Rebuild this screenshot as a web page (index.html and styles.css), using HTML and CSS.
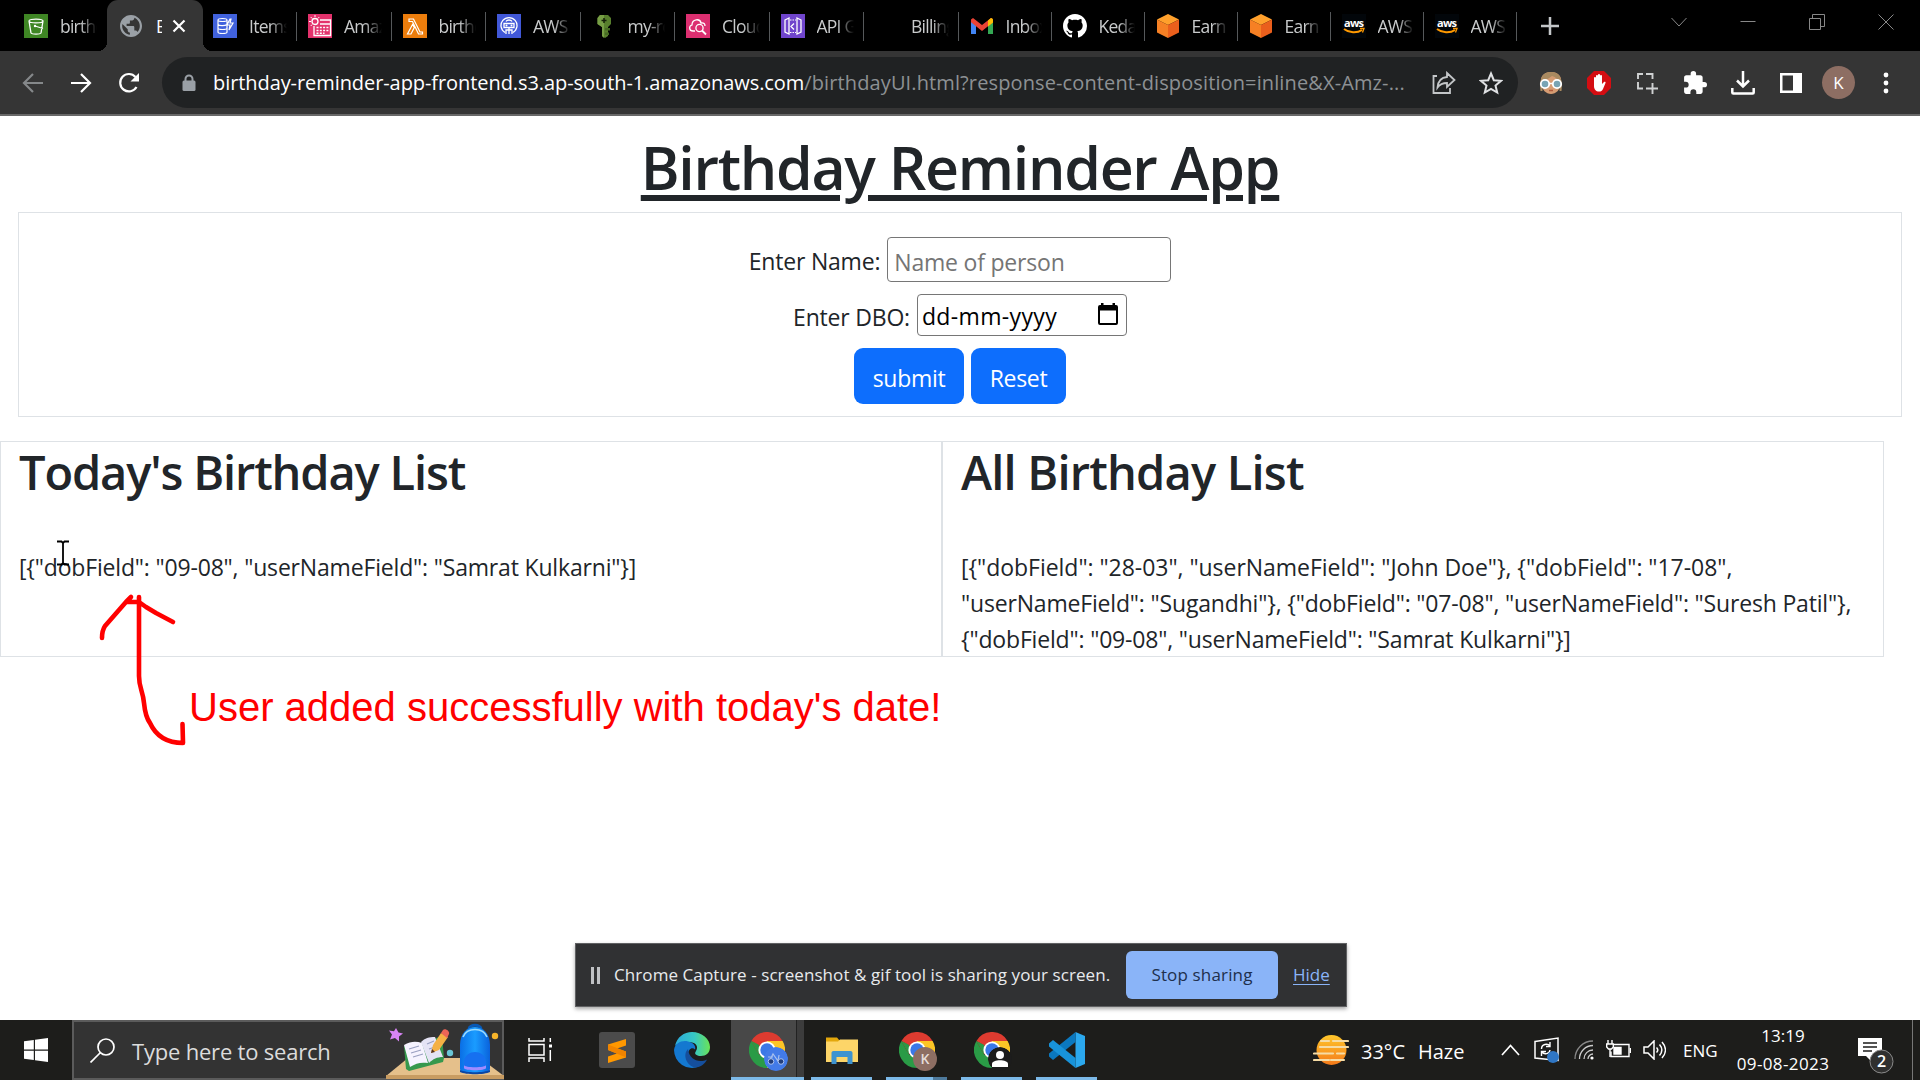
FILE: index.html
```html
<!DOCTYPE html>
<html lang="en">
<head>
<meta charset="utf-8">
<title>Birthday Reminder App</title>
<link rel="stylesheet" href="styles.css">
</head>
<body>
<svg class="defs" width="0" height="0">
  <defs>
    <symbol id="chrome" viewBox="0 0 36 36">
      <path d="M18 18 2.4 9A18 18 0 0 1 33.600 9z" fill="#dd3b30"/>
      <path d="M18 18V9h15.600A18 18 0 0 1 18 36z" fill="#fcc526"/>
      <path d="M18 36A18 18 0 0 1 2.400 9L10.200 22.500 18 27l7.800-4.500z" fill="#2a9b46"/>
      <path d="M18 9 10.200 13.500 2.400 9l7.800 13.500z" fill="#dd3b30"/>
      <path d="M2.400 9l7.800 13.500V13z" fill="#2a9b46"/>
      <circle cx="18" cy="18" r="8.600" fill="#fff"/><circle cx="18" cy="18" r="6.700" fill="#3a78e7"/>
    </symbol>
    <symbol id="cube" viewBox="0 0 24 24">
      <path d="M12 0 23 5.500 12 11 1 5.500z" fill="#ffa02c"/><path d="M1 5.500 12 11v13L1 18.500z" fill="#f68024"/><path d="M23 5.500 12 11v13l11-5.500z" fill="#ea5f1c"/>
    </symbol>
    <symbol id="aws" viewBox="0 0 24 24">
      <rect width="24" height="24" fill="#02060a"/>
      <text x="2" y="13" font-size="11" font-weight="bold" textLength="20" fill="#fff" font-family="Open Sans, sans-serif">aws</text>
      <path d="M2 15c5 4 13 4.500 18 1" fill="none" stroke="#f90" stroke-width="2"/><path d="M18 14.500h4l-1.500 4" fill="none" stroke="#f90" stroke-width="1.300"/>
    </symbol>
  </defs>
</svg>

<header class="tabs">
  <div class="tab first"><svg class="fav" viewBox="0 0 24 24"><rect width="24" height="24" fill="#3f8624"/><path d="M5 7l2 12c1 1.500 9 1.500 10 0l2-12M5 7c0-2.500 14-2.500 14 0s-14 2.500-14 0M11 12l8 2.500" fill="none" stroke="#fff" stroke-width="1.300"/><circle cx="11" cy="12" r="1.200" fill="#fff"/></svg><span class="name">birthday</span></div>
  <div class="tab active"><svg class="globe" viewBox="2 2 20 20"><path fill="#9aa0a6" d="M12 2C6.480 2 2 6.480 2 12s4.480 10 10 10 10-4.480 10-10S17.520 2 12 2zm-1 17.930c-3.950-.49-7-3.850-7-7.930 0-.62.080-1.210.210-1.790L9 15v1c0 1.100.9 2 2 2v1.930zm6.900-2.540c-.26-.81-1-1.390-1.900-1.390h-1v-3c0-.55-.45-1-1-1H8v-2h2c.55 0 1-.45 1-1V7h2c1.100 0 2-.9 2-2v-.41c2.930 1.190 5 4.060 5 7.410 0 2.080-.8 3.970-2.100 5.390z"/></svg><span class="name">B</span><svg class="close" viewBox="0 0 14 14"><path d="M1.500 1.500l11 11m0-11l-11 11" stroke="#fff" stroke-width="2.200"/></svg></div>
  <div class="tab sep"><svg class="fav" viewBox="0 0 24 24"><rect width="24" height="24" fill="#4162dd"/><path d="M5 6v12c0 2 9 2 9 0V6M5 6c0-2 9-2 9 0s-9 2-9 0M5 10c0 2 7 2 9 .5M5 14c0 2 9 2 9 0M17 5l-3 6h3l-1 5 4-7h-3l1-4z" fill="none" stroke="#fff" stroke-width="1.200"/></svg><span class="name">Items</span></div>
  <div class="tab sep"><svg class="fav" viewBox="0 0 24 24"><rect width="24" height="24" fill="#e3326c"/><path d="M12 6h10.500v15.500H6V12M12 10h10.500" fill="none" stroke="#fff" stroke-width="1.300"/><path d="M8.500 13.500h12M8.500 16.500h12M8.500 19.300h8" stroke="#fff" stroke-width="1.500" stroke-dasharray="2 1.300"/><circle cx="7" cy="7.500" r="3" fill="none" stroke="#fff" stroke-width="1.300"/><path d="M7 1v2M1 7.500h2M2.700 3l1.500 1.500M11.300 3l-1.500 1.500M2.700 12l1.500-1.500" stroke="#fff"/></svg><span class="name">Amazon</span></div>
  <div class="tab sep"><svg class="fav" viewBox="0 0 24 24"><rect width="24" height="24" fill="#ec7d0c"/><path d="M6 5h4.500l6.500 13h2.500v2H15.500L9.500 7.500H6zM9.500 10.500l-5 9.500h3.500l3.300-6.500z" fill="none" stroke="#fff" stroke-width="1.200"/></svg><span class="name">birthday</span></div>
  <div class="tab sep"><svg class="fav" viewBox="0 0 24 24"><rect width="24" height="24" fill="#4158d8"/><path d="M8 18.500a8 8 0 1 1 8 0M9 20v-4h6v4M12 16v4M7 9.500h10v4H7zM9 7.500c1-2 5-2 6 0M12 14v2" fill="none" stroke="#fff" stroke-width="1.300"/><circle cx="9.500" cy="11.500" r="1" fill="#fff"/><circle cx="14.500" cy="11.500" r="1" fill="#fff"/></svg><span class="name">AWS</span></div>
  <div class="tab sep"><svg class="fav" viewBox="0 0 24 24"><path d="M8 1h8l3 3v6l-3 3v9l-3 2-3-2V13L5.500 10V4z" fill="#587f2d"/><path d="M5.500 4 8 1h4v23l-2-2V13L5.500 10z" fill="#779e45"/><path d="M12 4v5M9.500 6.500h5" stroke="#152009" stroke-width="1.500"/><path d="M13 14h5v2.500h-5M13 18.500h4V21h-4" fill="#466b23"/></svg><span class="name">my-role</span></div>
  <div class="tab sep"><svg class="fav" viewBox="0 0 24 24"><rect width="24" height="24" fill="#dc2f70"/><path d="M9 17H7c-4 0-4.500-5-1-6 0-6 8-7 9-2 3-.5 4 1 4 3" fill="none" stroke="#fff" stroke-width="1.300"/><circle cx="13.500" cy="14" r="3.600" fill="none" stroke="#fff" stroke-width="1.300"/><path d="M16 16.500l4 4" stroke="#fff" stroke-width="1.800"/></svg><span class="name">CloudW</span></div>
  <div class="tab sep"><svg class="fav" viewBox="0 0 24 24"><rect width="24" height="24" fill="#7045cc"/><path d="M4 6l4-2v16l-4-2zM20 6l-4-2v16l4-2zM13 9.500l-3 3 3 3" fill="none" stroke="#fff" stroke-width="1.300"/><path d="M9 6h6M9 18.500h6" stroke="#fff" stroke-dasharray="1.500 1"/></svg><span class="name">API Ga</span></div>
  <div class="tab sep"><span class="fav"></span><span class="name">Billing</span></div>
  <div class="tab sep n"><svg class="fav" viewBox="0 0 24 24"><path d="M1 6v14h5V11z" fill="#4285f4"/><path d="M23 6v14h-5V11z" fill="#34a853"/><path d="M1 5.500 3 4l9 7 9-7 2 1.500v2.700L12 17 1 8.200z" fill="#ea4335"/><path d="M18 6.500 21 4c1 0 2 .7 2 2v2.500l-5 4z" fill="#fbbc04"/></svg><span class="name">Inbox</span></div>
  <div class="tab sep n"><svg class="fav" viewBox="0 0 16 16"><path fill="#fff" d="M8 0C3.580 0 0 3.580 0 8c0 3.540 2.290 6.530 5.470 7.590.4.070.55-.17.55-.38 0-.19-.01-.82-.01-1.490-2.010.37-2.530-.49-2.690-.94-.09-.23-.48-.94-.82-1.130-.28-.15-.68-.52-.01-.53.630-.01 1.080.58 1.230.82.720 1.210 1.870.87 2.330.66.070-.52.280-.87.510-1.070-1.780-.2-3.640-.89-3.640-3.950 0-.87.310-1.590.820-2.150-.08-.2-.36-1.020.080-2.120 0 0 .67-.21 2.200.82.640-.18 1.320-.27 2-.27s1.360.09 2 .27c1.530-1.040 2.200-.82 2.200-.82.440 1.100.160 1.920.080 2.120.510.560.820 1.270.820 2.150 0 3.070-1.870 3.750-3.650 3.950.290.250.540.730.540 1.480 0 1.070-.01 1.930-.01 2.200 0 .21.150.46.550.38A8 8 0 0 0 16 8c0-4.420-3.580-8-8-8z"/></svg><span class="name">Kedar</span></div>
  <div class="tab sep n"><svg class="fav"><use href="#cube"/></svg><span class="name">Earn F</span></div>
  <div class="tab sep n"><svg class="fav"><use href="#cube"/></svg><span class="name">Earn F</span></div>
  <div class="tab sep n"><svg class="fav"><use href="#aws"/></svg><span class="name">AWS</span></div>
  <div class="tab sep n"><svg class="fav"><use href="#aws"/></svg><span class="name">AWS</span></div>
  <svg class="plus" viewBox="0 0 20 20"><path d="M10 1v18M1 10h18" stroke="#c4c7c9" stroke-width="2.500"/></svg>
  <div class="winctl">
    <svg viewBox="0 0 16 16"><path d="M.5 4l7.500 8 7.500-8"/></svg>
    <svg viewBox="0 0 16 16"><path d="M.5 7.500h15"/></svg>
    <svg viewBox="0 0 16 16"><path d="M.5 4.500h11v11H.5zM3.500 4V.5h12v12H12"/></svg>
    <svg viewBox="0 0 16 16"><path d="M.5.5l15 15m0-15l-15 15"/></svg>
  </div>
</header>

<nav class="toolbar">
  <svg class="nav" viewBox="0 0 22 22" stroke="#85888a"><path d="M21 11H2.500M11 2l-9 9 9 9"/></svg>
  <svg class="nav" viewBox="0 0 22 22" stroke="#fff"><path d="M1 11h18.500M11 2l9 9-9 9"/></svg>
  <svg class="nav" viewBox="0 0 22 22" stroke="#fff"><path d="M18.500 15A8.700 8.700 0 1 1 17.500 5"/><path d="M21 1v8.500h-8.500z" fill="#fff" stroke="none"/></svg>
  <div class="omnibox">
    <svg class="lock" viewBox="0 0 14 18"><path d="M3.500 8V5a3.500 3.500 0 0 1 7 0v3" fill="none" stroke="#9aa0a6" stroke-width="2"/><rect y="6.500" x=".5" width="13" height="10.500" rx="1.500" fill="#9aa0a6"/></svg>
    <div class="url"><span class="host">birthday-reminder-app-frontend.s3.ap-south-1.amazonaws.com</span><span class="path">/birthdayUI.html?response-content-disposition=inline&amp;X-Amz-...</span></div>
    <svg class="act" viewBox="0 0 24 24"><path d="M5 5H1.500v17H18v-5M15 2l7.500 7L15 16v-4c-4 0-7 1-9.500 4.500C6 10.500 9 6.500 15 6z" fill="none" stroke="#c3c6c8" stroke-width="1.800"/></svg>
    <svg class="act" viewBox="0 0 24 24"><path d="M12 2.500l2.800 6.700 7.200.6-5.500 4.700 1.700 7L12 17.800 5.800 21.500l1.700-7L2 9.800l7.200-.6z" fill="none" stroke="#dfe1e3" stroke-width="2"/></svg>
  </div>
  <div class="ext">
    <svg viewBox="0 0 24 24"><path d="M2 12C1 5 5 1 12 1s11 4 10 11c-1 7-5 11-10 11S3 19 2 12z" fill="#d69c72"/><path d="M1.500 20C0 8 3 1 12 1s12 7 10.500 19L20.500 20V12C19 9 17 6 13 5 9 8 6 9 3.500 11v9z" fill="#a98a60"/><circle cx="6" cy="13" r="4.200" fill="#78a4b4" stroke="#fff" stroke-width="1.800"/><circle cx="18" cy="13" r="4.200" fill="#78a4b4" stroke="#fff" stroke-width="1.800"/><path d="M10 12.500h4" stroke="#fff" stroke-width="1.500"/><path d="M10 19.500h4" stroke="#b05a3c" stroke-width="1.500"/></svg>
    <svg viewBox="0 0 24 24"><path d="M7 0h10l7 7v10l-7 7H7l-7-7V7z" fill="#d40d12"/><path d="M7 15V7c0-1.500 2-1.500 2 0v4V5c0-1.500 2-1.500 2 0v6V4c0-1.500 2-1.500 2 0v7V5c0-1.500 2-1.500 2 0v8l2-2c1-.8 2 0 1.500 1L16 18c-1 2-2 2.500-4 2.500-3 0-5-2-5-5.500z" fill="#fff"/></svg>
    <svg viewBox="0 0 24 24"><path d="M3 8V3h5M11 3h6.500v5M3 11v6.500h5M11 17.500h2M17.500 12v11M12.500 17.500h10.500" fill="none" stroke="#d0d2d3" stroke-width="1.900"/></svg>
    <svg viewBox="1 1 22 22"><path fill="#fff" d="M20.500 11H19V7c0-1.100-.9-2-2-2h-4V3.500a2.500 2.500 0 0 0-5 0V5H4c-1.100 0-2 .9-2 2v3.800h1.500a2.700 2.700 0 0 1 0 5.400H2V20c0 1.100.9 2 2 2h3.800v-1.500a2.700 2.700 0 0 1 5.400 0V22H17c1.100 0 2-.9 2-2v-4h1.500a2.500 2.500 0 0 0 0-5z"/></svg>
    <svg viewBox="0 0 24 24"><path d="M12 0v15M6 9.500l6 6 6-6M1.300 17v4.500q0 1 1 1h19.400q1 0 1-1V17" fill="none" stroke="#fff" stroke-width="2.500"/></svg>
    <svg viewBox="0 0 24 24"><path fill="#fff" fill-rule="evenodd" d="M1 2h22v20H1zM3.500 4.500v15H14v-15z"/></svg>
    <span class="avatar">K</span>
    <svg viewBox="0 0 24 24" fill="#fff"><circle cx="12" cy="4" r="2.400"/><circle cx="12" cy="12" r="2.400"/><circle cx="12" cy="20" r="2.400"/></svg>
  </div>
</nav>

<main class="page">
  <h1>Birthday Reminder App</h1>
  <form class="panel">
    <div class="row name-row"><label>Enter Name:</label><div class="field text">Name of person</div></div>
    <div class="row dob-row"><label>Enter DBO:</label><div class="field date"><span>dd-mm-yyyy</span><svg viewBox="0 0 20 22" width="20" height="22"><path fill-rule="evenodd" d="M3 0h2.500v2h9V0H17v2h1a2 2 0 0 1 2 2v16a2 2 0 0 1-2 2H2a2 2 0 0 1-2-2V4a2 2 0 0 1 2-2h1zM2 7.500V20h16V7.500z"/></svg></div></div>
    <div class="row btn-row"><button type="button" class="btn submit">submit</button><button type="button" class="btn reset">Reset</button></div>
  </form>
  <section class="lists">
    <div class="card today"><h2>Today's Birthday List</h2><p>[{"dobField": "09-08", "userNameField": "Samrat Kulkarni"}]</p></div>
    <div class="card all"><h2>All Birthday List</h2><p><span class="loose">[{"dobField": "28-03", "userNameField": "John Doe"}, {"dobField": "17-08",</span><br>"userNameField": "Sugandhi"}, {"dobField": "07-08", "userNameField": "Suresh Patil"},<br>{"dobField": "09-08", "userNameField": "Samrat Kulkarni"}]</p></div>
  </section>
</main>

<svg class="cursor" viewBox="0 0 14 26"><path d="M1 1.500h4.500L7 3l1.500-1.500H13M7 2.500v21M1 24.500h4.500L7 23l1.500 1.500H13" fill="none" stroke="#000" stroke-width="1.800"/></svg>
<svg class="arrow" viewBox="0 0 100 160"><path d="M2 47C2 42 3 38 5 35L26 11l5-5M27 11h12l7 5 10 6 17 9M39 6v79c0 12 4 15 5 27 1 10 3 16 6 20 6 13 16 20 33 20l-.5-19" fill="none" stroke="#f00" stroke-width="4.600" stroke-linecap="round" stroke-linejoin="round"/></svg>
<div class="note">User added successfully with today's date!</div>

<aside class="sharebar">
  <span class="pause"></span>
  <span class="msg">Chrome Capture - screenshot &amp; gif tool is sharing your screen.</span>
  <span class="stop">Stop sharing</span>
  <span class="hide">Hide</span>
</aside>

<footer class="taskbar">
  <div class="start"><svg viewBox="0 0 24 24" width="24" height="24"><path fill="#fff" d="M0 3.300 9.800 2v9.500H0zM11 1.800 24 0v11.500H11zM0 12.700h9.800V22L0 20.700zM11 12.700h13V24l-13-1.800z"/></svg></div>
  <div class="search">
    <svg class="mag" viewBox="0 0 25 25"><circle cx="16" cy="9" r="8" fill="none" stroke="#fff" stroke-width="1.700"/><path d="M10.500 14.500.5 24.500" stroke="#fff" stroke-width="1.700"/></svg>
    <span class="ph">Type here to search</span>
    <svg class="art" viewBox="0 0 118 58">
      <defs><linearGradient id="bag"><stop offset="0" stop-color="#0a6fe6"/><stop offset=".5" stop-color="#1a9cff"/><stop offset="1" stop-color="#0a62dc"/></linearGradient></defs>
      <path d="M22 37h72l24 18v3H0v-3z" fill="#e5c08b"/><path d="M0 54h118v4H0z" fill="#c89c62"/>
      <path d="M10 7l2.500 4.500 4.500 1-4 3v5l-4-3.500-5 1.500 2-5L3 9.500l5 .8z" fill="#d884f5"/>
      <path d="M18 25l18-3 20-7 2 22-1 4-34 9-3-2z" fill="#36984d"/>
      <path d="M18 24c7-4 12-4 18-2l6 20c-7-1-12 0-18 4z" fill="#f6f3ff"/><path d="M35 21c4-4 8-5 14-5l8 20c-6 0-10 2-14 6z" fill="#e5e3f5"/>
      <path d="M23 28l10-3M25 32l10-3M27 36l10-3M41 23l7-3M43 28l6-2" stroke="#9aa0c2" stroke-width="1.300"/>
      <path d="M45 32l2-8L55 12l7 4-9 13z" fill="#f5b044"/><path d="M55 12l2-3c2-2 7 1 6 4l-2 4z" fill="#ec6557"/><path d="M45 32l1-4 3 3z" fill="#553223"/>
      <circle cx="64" cy="32" r="3.200" fill="#69c6d7"/><circle cx="109" cy="15" r="3.200" fill="#f8b52b"/>
      <path d="M83 8c0-5 12-5 12 0" fill="none" stroke="#0859b5" stroke-width="3"/>
      <path d="M74 48V24c0-24 30-24 30 0v24c0 6-30 6-30 0z" fill="url(#bag)"/>
      <path d="M77 16c4-10 20-10 24 0" fill="none" stroke="#9bdcff" stroke-width="1.600"/>
      <path d="M78 46V40c2-12 20-12 22 0v6c0 4-22 4-22 0z" fill="#1670f0"/><path d="M78 44c0 3 22 3 22 0v3c0 3-22 3-22 0z" fill="#a08bff"/>
      <path d="M74 49c6 3 24 3 30 0v2c-6 3-24 3-30 0z" fill="#0a46a5"/>
    </svg>
  </div>
  <div class="tview"><svg viewBox="0 0 24 24" width="24" height="24" fill="none" stroke="#fff" stroke-width="1.500"><path d="M1 0v3h15V0M1 24v-4h15v4M1 6.500h15v10.500H1zM22.300 0v4M22.300 12v11"/><path d="M21 8h3" stroke-width="3"/></svg></div>
  <div class="app sub"><svg viewBox="0 0 36 36"><rect width="36" height="36" rx="3" fill="#4b4b4b"/><path d="M9 12.500 27 7v6.500l-9 3 9 3v6L9 31v-6.500l9-3-9-3.500z" fill="#ff9800"/><path d="M9 12.500l18 7v6L9 18z" fill="#f08400"/></svg></div>
  <div class="app edge"><svg viewBox="0 0 36 36">
    <defs><linearGradient id="eg"><stop offset="0" stop-color="#2ba9dc"/><stop offset=".55" stop-color="#37c8c5"/><stop offset="1" stop-color="#6ae356"/></linearGradient></defs>
    <path d="M1 14C3 5 10 0 18 0c10 0 18 7 18 15 0 6-4 9-9 9-4 0-7-2-5.500-4 4-6 0-10-7-10C8 10 3 12 1 14z" fill="url(#eg)"/>
    <path d="M0 18C1 11 8 8 14 9.500c6 1 8 5 7 8-3-3-7 0-7 5 0 7 5 12 11 12A18 18 0 0 1 0 18z" fill="#1478d0"/>
    <path d="M14 17c-6 6-1 17 7 18.500 6 0 10-4 12-8-8 4-18 0-19-10.500z" fill="#154f9d"/></svg></div>
  <div class="app current on"><svg viewBox="0 0 36 36"><use href="#chrome"/></svg><svg class="badge" viewBox="0 0 24 24"><circle cx="12" cy="12" r="12" fill="#437be8"/><path d="M6 13l3-6 5 7 1-6M4 10h5" stroke="#a8c0ee" stroke-width="1.200" fill="none"/><circle cx="7" cy="14.500" r="2.800" fill="#233f7c" stroke="#a9c1f0"/><circle cx="17" cy="14.500" r="2.800" fill="#233f7c" stroke="#a9c1f0"/></svg></div>
  <div class="app folder on"><svg viewBox="0 0 36 36"><path d="M2 5.500h11l2.500 3H34V10H2z" fill="#e3a70c"/><path d="M2 9.500h12l2-2h18V30H2z" fill="#fdd568"/><path d="M7.500 32V21c0-1 .5-2 2-2h17c1.500 0 2 1 2 2v11h-5v-7h-11v7z" fill="#3e93cf"/></svg></div>
  <div class="app on split"><svg viewBox="0 0 36 36"><use href="#chrome"/></svg><span class="badge k">K</span></div>
  <div class="app on"><svg viewBox="0 0 36 36"><use href="#chrome"/></svg><svg class="badge" viewBox="0 0 24 24"><circle cx="12" cy="12" r="12" fill="#1c1c1c"/><circle cx="12" cy="8" r="4" fill="#fff"/><path d="M4 20v-3c0-5 16-5 16 0v3z" fill="#fff"/></svg></div>
  <div class="app on code"><svg viewBox="0 0 36 36"><path d="M26.500 0 36 4v28l-9.500 4z" fill="#2ba8ee"/><path d="M26.500 0v10L4 28l-4-3.500v-3z" fill="#0b78bf"/><path d="M26.500 36V26L4 8 0 11.500v3z" fill="#1893da"/></svg></div>
  <div class="tray">
    <svg class="haze" viewBox="0 0 36 32"><defs><linearGradient id="hz" x2="0" y2="1"><stop offset="0" stop-color="#ffc72c"/><stop offset="1" stop-color="#f47a1a"/></linearGradient></defs><circle cx="18.500" cy="16" r="15" fill="url(#hz)"/><path d="M8 7h8M20 7h15M7 13h10M18 13h17M1 19.500h19M24 19.500h7M1 26h15M18 26h13" stroke="#f6dca5" stroke-width="2.200" stroke-linecap="round"/></svg>
    <span class="temp">33°C</span><span class="cond">Haze</span>
    <svg class="chev" viewBox="0 0 19 12"><path d="M1 11l8.500-9.500L18 11" fill="none" stroke="#fff" stroke-width="1.700"/></svg>
    <svg class="sync" viewBox="0 0 26 26"><path d="M1 4.500 24 1v22.500L1 21z" fill="none" stroke="#fff" stroke-width="1.500"/><path d="M7.500 12c0-5 6-6 8.500-3M16 5v4.500h-4M16 13c-.5 4-6 5-8 2M7.500 19v-4.500H12" fill="none" stroke="#fff" stroke-width="1.400"/><circle cx="19" cy="20" r="6" fill="#2f76c4"/></svg>
    <svg class="wifi" viewBox="0 0 20 20" fill="none" stroke-width="1.300"><path d="M1 19A18 18 0 0 1 19 1" stroke="#888"/><path d="M5.500 19A13.500 13.500 0 0 1 19 5.500M10 19a9 9 0 0 1 9-9M14 19a5 5 0 0 1 5-5" stroke="#ccc"/><circle cx="18" cy="18" r="1.600" fill="#fff"/></svg>
    <svg class="batt" viewBox="0 0 25 20" fill="none" stroke="#fff" stroke-width="1.400"><path d="M8 4.500h15v12H5v-5"/><path d="M24.300 8v5"/><path d="M8 7.500h7V14H8z" fill="#fff"/><path d="M2 0v4M6 0v4M.7 4h6.600v3L5.500 9h-3L.7 7zM4 9v8"/></svg>
    <svg class="vol" viewBox="0 0 23 20" fill="none" stroke="#fff" stroke-width="1.500"><path d="M1 7h4l6-6v18l-6-6H1z"/><path d="M13.500 7.500c1.500 1.500 1.500 3.500 0 5M16.500 4.500c3 3.500 3 7.500 0 11M19 2c4.500 5 4.500 11 0 16"/></svg>
    <span class="lang">ENG</span>
    <div class="clock"><span>13:19</span><span class="day">09-08-2023</span></div>
    <div class="notif"><svg viewBox="0 0 36 36" width="36" height="36"><path d="M0 0h24v18H14l-1 5-5-5H0z" fill="#fff"/><path d="M5 5h14M5 9h14M5 13h9" stroke="#1d1d1b" stroke-width="1.300"/><circle cx="23.500" cy="23.500" r="11.500" fill="#30302f" stroke="#8a8a8a"/></svg><b>2</b></div>
  </div>
</footer>
</body>
</html>
```
FILE: styles.css
```css
* { box-sizing: border-box; }
body { margin: 0; width: 1920px; height: 1080px; overflow: hidden; display: flex; flex-direction: column; background: #fff; font-family: "Open Sans", "Noto Sans", sans-serif; color: #212529; }
svg { display: block; flex: none; }
.defs { position: absolute; }

/* Tab strip */
.tabs { flex: none; height: 51px; background: #000; display: flex; align-items: center; }
.tab { flex: none; width: 94.5px; height: 51px; padding: 0 10px 0 11px; display: flex; align-items: center; gap: 12px; position: relative; font-size: 17.5px; color: #c9cbcc; }
.tab.n { width: 93px; }
.tab.first { width: 107px; padding-left: 24px; }
.fav { width: 24px; height: 24px; flex: none; }
.name { flex: 1; min-width: 0; overflow: hidden; white-space: nowrap; letter-spacing: -0.75px; -webkit-mask-image: linear-gradient(90deg, #000 55%, transparent); }
.tab.sep::after { content: ""; position: absolute; right: 0; top: 12px; width: 1px; height: 29px; background: #55585a; }
.tab.active { width: 96px; padding: 0 17px 0 13px; gap: 0; background: #353535; border-radius: 11px 11px 0 0; }
.active + .tab { width: 94px; padding-left: 10px; }
.active .name { flex: none; width: 6px; margin-left: 14px; margin-right: 10px; color: #fff; -webkit-mask-image: none; }
.globe { width: 22px; height: 22px; }
.close { width: 14px; height: 14px; }
.active::before, .active::after { content: ""; position: absolute; bottom: 0; width: 9px; height: 9px; }
.active::before { left: -9px; background: radial-gradient(circle at 0 0, transparent 9px, #353535 9px); }
.active::after { right: -9px; background: radial-gradient(circle at 100% 0, transparent 9px, #353535 9px); }
.plus { width: 20px; height: 20px; margin-left: 23px; }
.winctl { margin-left: auto; padding-right: 26px; display: flex; gap: 53px; margin-top: -8px; }
.winctl svg { width: 16px; height: 16px; fill: none; stroke: #888; stroke-width: 1; }

/* Address bar row */
.toolbar { flex: none; height: 65px; background: #353535; border-bottom: 2px solid #686868; display: flex; align-items: center; padding-left: 22px; }
.nav { width: 22px; height: 22px; margin-right: 26px; fill: none; stroke-width: 2.2; }
.omnibox { width: 1356px; height: 51px; border-radius: 26px; background: #202223; display: flex; align-items: center; padding: 0 15px 0 20px; margin-left: -4px; }
.lock { width: 14px; height: 18px; margin-right: 17px; }
.url { flex: 1; white-space: nowrap; font-size: 20px; }
.host { color: #fff; letter-spacing: -0.075px; }
.path { color: #8d9194; letter-spacing: 0.12px; }
.act { width: 24px; height: 24px; margin-left: 23px; }
.ext { display: flex; align-items: center; gap: 24px; margin-left: 21px; }
.ext svg { width: 24px; height: 24px; }
.avatar { width: 33px; height: 33px; margin: 0 -5px; border-radius: 50%; background: #8d6e63; color: #fff; font-size: 17px; display: flex; align-items: center; justify-content: center; }

/* Web page */
.page { flex: none; height: 904px; }
h1 { margin: 0; height: 96px; padding-top: 15px; text-align: center; font-size: 59px; line-height: 72px; font-weight: 600; letter-spacing: -1.28px; text-decoration: underline; text-decoration-thickness: 6px; text-underline-offset: 5px; }
.panel { margin: 0 18px; height: 205px; border: 1px solid #dee2e6; padding-top: 24px; font-size: 23px; letter-spacing: -0.2px; }
.row { display: flex; justify-content: center; align-items: center; white-space: nowrap; }
.row label { margin-right: 7px; padding-top: 3px; }
.field { border: 1px solid #767676; border-radius: 4px; display: flex; align-items: center; }
.text { width: 284px; height: 45px; padding: 4px 0 0 6px; color: #757575; }
.date { width: 210px; height: 42px; padding: 2px 8px 0 4px; justify-content: space-between; color: #000; letter-spacing: 0.35px; }
.date svg { margin-top: -4px; }
.dob-row { margin-top: 12px; }
.btn-row { margin-top: 12px; gap: 7px; }
.btn { height: 56px; border: 0; border-radius: 9px; background: #0d6efd; color: #fff; font: 23px "Open Sans", sans-serif; letter-spacing: -0.3px; padding: 3px 0 0; }
.submit { width: 110px; }
.reset { width: 95px; }
.lists { display: flex; margin-top: 24px; width: 1884px; height: 216px; }
.card { width: 942px; border: 1px solid #dee2e6; padding: 1px 18px 0; }
h2 { margin: 0; font-size: 47px; line-height: 58px; font-weight: 600; white-space: nowrap; letter-spacing: -1.15px; }
.all h2 { letter-spacing: -0.8px; }
p { margin: 48px 0 0; font-size: 23px; line-height: 36px; letter-spacing: -0.175px; white-space: nowrap; }
.loose { letter-spacing: -0.035px; }

/* Marks drawn over the page */
.cursor { position: absolute; left: 56px; top: 540px; width: 14px; height: 26px; }
.arrow { position: absolute; left: 100px; top: 591px; width: 100px; height: 160px; overflow: visible; }
.note { position: absolute; left: 189px; top: 684px; font: 40px/46px "Liberation Sans", Arial, sans-serif; color: #f00; white-space: nowrap; }

/* Screen sharing notice */
.sharebar { position: absolute; left: 575px; top: 943px; width: 772px; height: 64px; background: #303133; border: 1px solid #606163; box-shadow: 0 2px 4px rgba(0,0,0,.35); display: flex; align-items: center; padding-left: 15px; font-size: 17px; color: #e8eaed; white-space: nowrap; }
.pause { width: 9px; height: 17px; border: solid #bfc1c4; border-width: 0 3px; margin-right: 14px; }
.msg { width: 512px; letter-spacing: 0.08px; padding-bottom: 2px; }
.stop { width: 152px; height: 48px; border-radius: 6px; background: #8ab4f8; color: #202f4c; font-weight: 500; letter-spacing: 0.15px; padding-bottom: 2px; display: flex; align-items: center; justify-content: center; margin-right: 15px; }
.hide { color: #8ab4f8; text-decoration: underline; text-underline-offset: 3px; padding-bottom: 2px; }

/* Taskbar */
.taskbar { flex: none; height: 60px; background: #1d1d1b; display: flex; align-items: stretch; color: #fff; position: relative; }
.start { width: 72px; display: flex; align-items: center; justify-content: center; }
.search { width: 432px; border: 2px solid #5b5b5b; background: #333; display: flex; align-items: center; padding-left: 16px; }
.mag { width: 25px; height: 25px; }
.ph { width: 256px; margin-left: 17px; padding-top: 2px; font-size: 22px; letter-spacing: -0.2px; color: #dcdcdc; white-space: nowrap; }
.art { width: 118px; height: 58px; margin-right: -2px; }
.tview { width: 72px; display: flex; align-items: center; justify-content: center; }
.app { width: 61px; margin-right: 14px; display: flex; align-items: center; justify-content: center; position: relative; }
.app > svg { width: 36px; height: 36px; }
.sub { margin-left: 10px; }
.current { width: 73px; margin-right: 7px; margin-left: -11px; padding-right: 1px; background: #484848; }
.edge { margin-right: 20px; }
.current::before { content: ""; position: absolute; right: 0; top: 0; bottom: 0; width: 7px; background: #3c3c3c; border-left: 1px solid #222; }
.on::after { content: ""; position: absolute; left: 0; right: 0; bottom: 0; height: 3px; background: #7cb9e8; }
.split::after { background: linear-gradient(90deg, #7cb9e8 47px, #4e7a9c 47px); }
.app > .badge { position: absolute; left: 27px; top: 27px; width: 24px; height: 24px; border-radius: 50%; }
.current > .badge { left: 33px; }
.k { background: #8d6e63; color: #e5dcd9; font-size: 14px; font-weight: 600; text-align: center; line-height: 24px; }
.tray { display: flex; align-items: center; margin-left: auto; white-space: nowrap; padding-right: 18px; margin-right: 7px; border-right: 1px solid #777; }
.haze { width: 36px; height: 32px; }
.temp, .cond { font-size: 20px; width: 44px; margin-left: 12px; padding-top: 3px; }
.cond { width: 45px; margin-left: 13px; }
.chev { width: 19px; height: 12px; margin-left: 38px; }
.sync { width: 26px; height: 26px; margin-left: 14px; }
.wifi { width: 20px; height: 20px; margin-left: 14px; }
.batt { width: 25px; height: 20px; margin-left: 12px; }
.vol { width: 23px; height: 20px; margin-left: 12px; }
.lang { font-size: 17px; width: 34px; margin-left: 17px; }
.clock { display: flex; flex-direction: column; align-items: center; width: 94px; margin-left: 19px; font-size: 17px; line-height: 28px; }
.day { letter-spacing: 0.4px; }
.notif { position: relative; width: 36px; height: 36px; margin-left: 28px; margin-top: 12px; }
.notif b { position: absolute; left: 12px; top: 12px; width: 23px; text-align: center; font-size: 16px; line-height: 23px; font-weight: 600; }
```
